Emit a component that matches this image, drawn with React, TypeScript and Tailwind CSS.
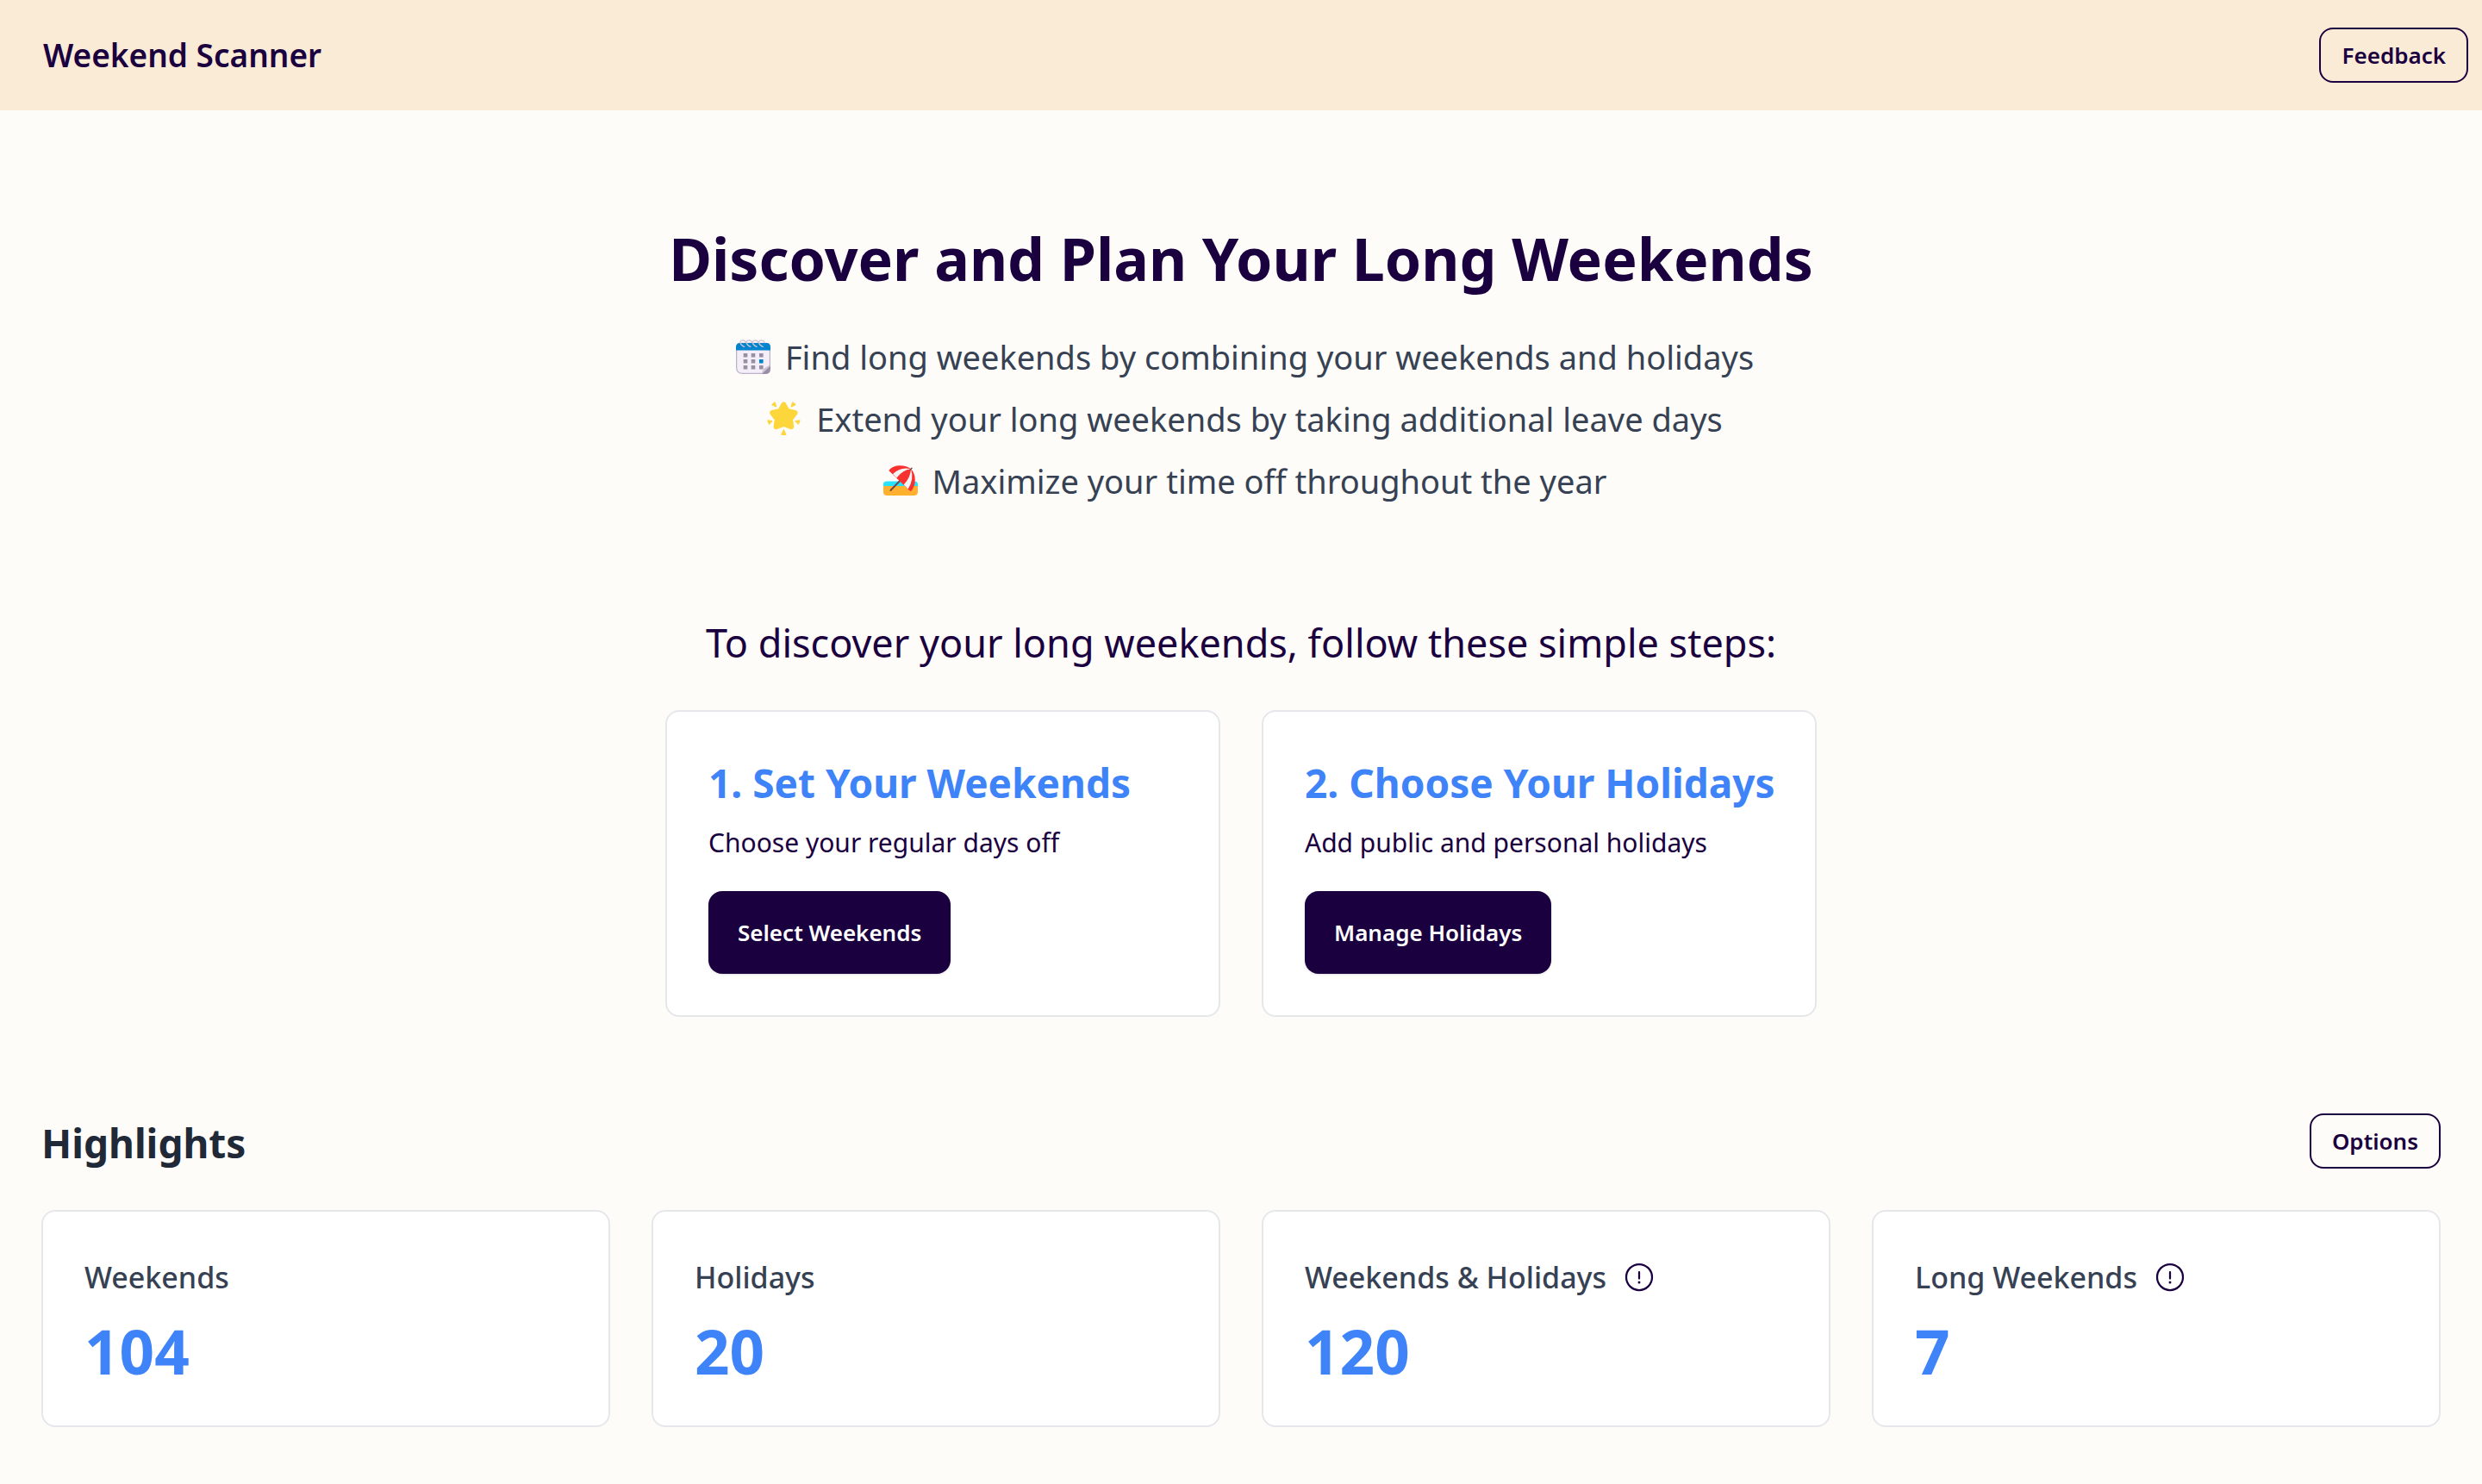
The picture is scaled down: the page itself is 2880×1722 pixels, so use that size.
import type { ReactNode } from "react";

function CalendarIcon() {
  return (
    <svg viewBox="-9 0 54 40" className="w-[54px] h-10" aria-hidden="true">
      <path
        d="M0.6 9 Q0.6 4.4 5 4.4 H35 Q39.4 4.4 39.4 9 V31 L31 39.4 H8 Q0.6 39.4 0.6 32 Z"
        fill="#f3eef8"
        stroke="#bbb1c8"
        strokeWidth="1.2"
      />
      <path d="M0 12.6 V9 Q0 4 5 4 H35 Q40 4 40 9 V12.6 Z" fill="#0084ce" />
      {[5, 12.2, 19.4, 26.6].map((x) => (
        <path
          key={x}
          d={`M${x + 6.5} 3.6 C${x + 6} 0.2 ${x} -0.4 ${x} 3.4 Q${x + 0.6} 6.6 ${x + 4.6} 8.4`}
          fill="none"
          stroke="#cdc4d6"
          strokeWidth="1.3"
          strokeLinecap="round"
        />
      ))}
      {[16, 23, 30].map((y) =>
        [8.7, 17.7, 27].map((x) => (
          <rect
            key={`${x}-${y}`}
            x={x}
            y={y}
            width="4.6"
            height="4.5"
            fill={x === 27 && y === 23 ? "#0084ce" : "#998ea4"}
          />
        ))
      )}
      <path d="M30 40 L40 30 Q38 30 36 31.4 Q30.6 33 30 40 Z" fill="#cdc4d6" />
      <path d="M30 40 L40 30.6 V34 Q40 40 34 40 Z" fill="#998ea4" />
    </svg>
  );
}

function StarIcon() {
  return (
    <svg viewBox="-9 0 54 40" className="w-[54px] h-10" aria-hidden="true">
      <g fill="#fdd63c" stroke="#fdd63c" strokeLinejoin="round">
        <path
          strokeWidth="6"
          d="M19.4 3.4 L23.6 11 L32.6 13 L27 20.4 L28.2 29.2 L19.4 26 L10.6 29.2 L11.8 20.4 L6.2 13 L15.2 11 Z"
        />
        <path
          strokeWidth="1.4"
          d="M9 1 L10.6 5.8 L6 3.6 Z M29.8 1 L28.2 5.8 L32.8 3.6 Z M1 22 L5.8 22.6 L2.4 26 Z M37.8 22 L33 22.6 L36.4 26 Z M19.4 33 L21.8 38.2 H17 Z"
        />
      </g>
    </svg>
  );
}

function BeachIcon() {
  return (
    <svg viewBox="-9 0 54 40" className="w-[54px] h-10" aria-hidden="true">
      <path d="M0 26 V24.5 Q0 20.5 4 20.5 H36 Q40 20.5 40 24.5 V26 Z" fill="#26e2fb" />
      <path d="M0 26 H40 V32.5 Q40 37 35.5 37 H4.5 Q0 37 0 32.5 Z" fill="#ffb02e" />
      <path d="M22 17 L8.4 31" stroke="#6d4543" strokeWidth="1.8" strokeLinecap="round" />
      <path
        d="M6.3 8 C11 0.4 26 0.6 32 6.3 C38.4 12 38.4 26 32 32.3 L29 30 L6.3 8 Z"
        fill="#f8312f"
      />
      <path d="M32 6.3 Q20 3 11 12 L15.4 16.6 Q22 7.4 32 6.3 Z" fill="#f4f4f4" />
      <path d="M32 6.3 Q31.6 16 23.6 24.6 L28.6 29.6 Q36 18 32 6.3 Z" fill="#f4f4f4" />
      <path d="M31.2 7 L33 5.2" stroke="#6d4543" strokeWidth="1.5" strokeLinecap="round" />
    </svg>
  );
}

function InfoIcon() {
  return (
    <svg
      viewBox="0 0 24 24"
      className="w-9 h-9"
      fill="none"
      stroke="currentColor"
      strokeLinecap="round"
      strokeLinejoin="round"
      aria-hidden="true"
    >
      <circle cx="12" cy="12" r="10" strokeWidth="1.5" />
      <path d="M12 8v5" strokeWidth="1.5" />
      <path d="M11.995 16h.009" strokeWidth="2" />
    </svg>
  );
}

function OutlineButton({ children }: { children: ReactNode }) {
  return (
    <button className="h-16 px-6 border-2 border-[#1b0040] rounded-2xl text-[26px] font-semibold">
      {children}
    </button>
  );
}

const features = [
  {
    icon: <CalendarIcon />,
    text: "Find long weekends by combining your weekends and holidays",
  },
  {
    icon: <StarIcon />,
    text: "Extend your long weekends by taking additional leave days",
  },
  {
    icon: <BeachIcon />,
    text: "Maximize your time off throughout the year",
  },
];

const steps = [
  {
    title: "1. Set Your Weekends",
    text: "Choose your regular days off",
    action: "Select Weekends",
  },
  {
    title: "2. Choose Your Holidays",
    text: "Add public and personal holidays",
    action: "Manage Holidays",
  },
];

const highlights = [
  { label: "Weekends", value: 104, info: false },
  { label: "Holidays", value: 20, info: false },
  { label: "Weekends & Holidays", value: 120, info: true },
  { label: "Long Weekends", value: 7, info: true },
];

export default function App() {
  return (
    <div className="min-h-screen bg-[#fdfcf8] text-[#1b0040] font-['Noto_Sans','Open_Sans',sans-serif]">

      {/* Header */}

      <header className="flex items-center justify-between bg-[#faebd7] py-8 pl-[50px] pr-4">

        <a href="#" className="text-[37px] leading-[64px] font-semibold">
          Weekend Scanner
        </a>

        <OutlineButton>Feedback</OutlineButton>

      </header>

      <main className="px-12 pt-32 pb-16">

        {/* Hero */}

        <section className="flex flex-col items-center">

          <h1 className="text-[68px] leading-[88px] font-bold">
            Discover and Plan Your Long Weekends
          </h1>

          <ul className="mt-[34px] flex flex-col items-center text-[38px] leading-[72px] text-gray-700">
            {features.map((feature) => (
              <li key={feature.text} className="flex items-center gap-3">
                {feature.icon}
                <span>{feature.text}</span>
              </li>
            ))}
          </ul>

        </section>

        {/* Steps */}

        <section className="mt-[120px] flex flex-col items-center">

          <h2 className="text-[45px] leading-[64px]">
            To discover your long weekends, follow these simple steps:
          </h2>

          <div className="mt-[46px] grid w-full max-w-[1336px] grid-cols-2 gap-12">
            {steps.map((step) => (
              <div
                key={step.title}
                className="bg-white border-2 border-[#e5e7eb] rounded-2xl p-12"
              >

                <h3 className="text-[46px] leading-[68px] font-bold text-[#3f83f8] whitespace-nowrap">
                  {step.title}
                </h3>

                <p className="mt-3 text-[30px] leading-[48px]">
                  {step.text}
                </p>

                <button className="mt-8 h-24 px-[34px] rounded-2xl bg-[#1b0040] text-white text-[26px] font-semibold shadow-sm">
                  {step.action}
                </button>

              </div>
            ))}
          </div>

        </section>

        {/* Highlights */}

        <section className="mt-28">

          <div className="flex items-start justify-between">

            <h2 className="text-[46px] leading-[68px] font-bold text-[#1f2937]">
              Highlights
            </h2>

            <OutlineButton>Options</OutlineButton>

          </div>

          <div className="mt-11 grid grid-cols-4 gap-12">
            {highlights.map((item) => (
              <div
                key={item.label}
                className="bg-white border-2 border-[#e5e7eb] rounded-2xl p-12"
              >

                <div className="flex items-center gap-5">

                  <h3 className="text-[34px] leading-[56px] font-medium text-gray-700">
                    {item.label}
                  </h3>

                  {item.info && (
                    <button aria-label={`About ${item.label}`}>
                      <InfoIcon />
                    </button>
                  )}

                </div>

                <p className="mt-5 text-[71px] leading-[76px] font-bold text-[#3f83f8]">
                  {item.value}
                </p>

              </div>
            ))}
          </div>

        </section>

      </main>

    </div>
  );
}
